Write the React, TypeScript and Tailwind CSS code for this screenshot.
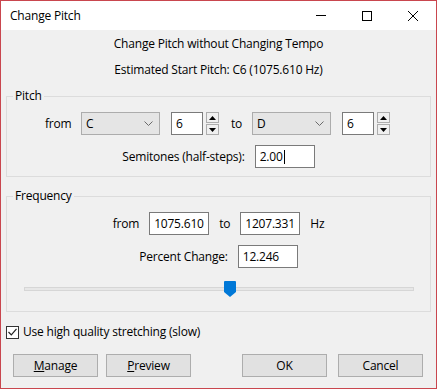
import React from 'react';

const font = { fontFamily: '"Segoe UI", "Open Sans", "Noto Sans", sans-serif' };

function Combo({ value }: { value: string }) {
  return (
    <div className="flex h-[23px] w-[79px] items-center justify-between border border-[#acacac] bg-[#e5e5e5] pl-[4px] pr-[5px]">
      <span>{value}</span>
      <svg width="9" height="5" viewBox="0 0 9 5" className="mr-[1px]">
        <path d="M0.5 0.5 L4.5 4.5 L8.5 0.5" fill="none" stroke="#6a6a6a" strokeWidth="1" />
      </svg>
    </div>
  );
}

function Field({ value, w = 'w-[60px]', caret = false }: { value: string; w?: string; caret?: boolean }) {
  return (
    <div className={`flex h-[23px] items-center border border-[#7a7a7a] bg-white pl-[4px] ${w}`}>
      <span>{value}</span>
      {caret && <span className="ml-[1px] h-[14px] w-[1px] bg-black" />}
    </div>
  );
}

function Spin() {
  return (
    <div className="flex flex-col gap-[1px]">
      <div className="flex h-[11px] w-[13px] items-center justify-center border border-[#adadad] bg-[#f0f0f0]">
        <svg width="7" height="4" viewBox="0 0 7 4"><path d="M0 4 L3.5 0 L7 4 Z" fill="#000" /></svg>
      </div>
      <div className="flex h-[11px] w-[13px] items-center justify-center border border-[#adadad] bg-[#f0f0f0]">
        <svg width="7" height="4" viewBox="0 0 7 4"><path d="M0 0 L3.5 4 L7 0 Z" fill="#000" /></svg>
      </div>
    </div>
  );
}

function Button({ children }: { children: React.ReactNode }) {
  return (
    <div className="flex h-[23px] w-[85px] items-center justify-center border border-[#adadad] bg-[#e1e1e1]">
      {children}
    </div>
  );
}

export default function App() {
  return (
    <div
      style={font}
      className="flex h-[389px] w-[437px] flex-col border border-[#c9464e] bg-[#f0f0f0] text-[12px] leading-[16px] tracking-[-0.2px] text-black"
    >
      {/* title bar */}
      <div className="flex h-[29px] items-center bg-white">
        <span className="ml-[9px] flex-1 text-[12px]">Change Pitch</span>
        <div className="flex h-full">
          <div className="flex w-[46px] items-center justify-center">
            <div className="h-[1px] w-[10px] bg-black" />
          </div>
          <div className="flex w-[46px] items-center justify-center">
            <div className="h-[10px] w-[10px] border border-black" />
          </div>
          <div className="flex w-[46px] items-center justify-center">
            <svg width="10" height="10" viewBox="0 0 10 10">
              <path d="M0 0 L10 10 M10 0 L0 10" stroke="#000" strokeWidth="1" />
            </svg>
          </div>
        </div>
      </div>

      <div className="mt-[6px] text-center">Change Pitch without Changing Tempo</div>
      <div className="mt-[10px] text-center">Estimated Start Pitch: C6 (1075.610 Hz)</div>

      {/* Pitch */}
      <fieldset className="mx-[5px] mt-[10px] border border-[#dcdcdc] pb-[8px]">
        <legend className="ml-[6px] px-[2px]">Pitch</legend>
        <div className="flex items-center pl-[38px] pt-[8px]">
          <span className="w-[36px]">from</span>
          <Combo value="C" />
          <div className="ml-[11px]">
            <Field value="6" w="w-[32px]" />
          </div>
          <div className="ml-[3px]">
            <Spin />
          </div>
          <span className="ml-[12px] w-[21px]">to</span>
          <Combo value="D" />
          <div className="ml-[11px]">
            <Field value="6" w="w-[32px]" />
          </div>
          <div className="ml-[3px]">
            <Spin />
          </div>
        </div>
        <div className="mt-[10px] flex items-center justify-center gap-[10px]">
          <span>Semitones (half-steps):</span>
          <Field value="2.00" caret />
        </div>
      </fieldset>

      {/* Frequency */}
      <fieldset className="mx-[5px] mt-[11px] border border-[#dcdcdc] pb-[14px]">
        <legend className="ml-[6px] px-[2px]">Frequency</legend>
        <div className="flex items-center justify-center gap-[10px] pt-[8px]">
          <span>from</span>
          <Field value="1075.610" />
          <span>to</span>
          <Field value="1207.331" />
          <span>Hz</span>
        </div>
        <div className="mt-[10px] flex items-center justify-center gap-[10px]">
          <span>Percent Change:</span>
          <Field value="12.246" />
        </div>
        <div className="relative ml-[17px] mt-[13px] flex h-[16px] w-[390px] items-center">
          <div className="h-[4px] w-full border border-[#d6d6d6] bg-[#e7e7e7]" />
          <svg className="absolute left-[200px] top-0" width="12" height="16" viewBox="0 0 12 16">
            <path d="M0 1 Q0 0 1 0 L11 0 Q12 0 12 1 L12 11 L6 16 L0 11 Z" fill="#0078d7" />
          </svg>
        </div>
      </fieldset>

      <div className="ml-[5px] mt-[12px] flex items-center gap-[4px]">
        <div className="flex h-[13px] w-[13px] items-center justify-center border border-[#333] bg-white">
          <svg width="9" height="8" viewBox="0 0 9 8">
            <path d="M0.5 4 L3.3 6.8 L8.5 0.8" fill="none" stroke="#222" strokeWidth="1.2" />
          </svg>
        </div>
        <span>Use high quality stretching (slow)</span>
      </div>

      <div className="ml-[12px] mt-[14px] flex items-center">
        <Button>
          <span><span className="underline">M</span>anage</span>
        </Button>
        <div className="ml-[8px]">
          <Button>
            <span><span className="underline">P</span>review</span>
          </Button>
        </div>
        <div className="ml-[51px]">
          <Button>OK</Button>
        </div>
        <div className="ml-[11px]">
          <Button>Cancel</Button>
        </div>
      </div>
    </div>
  );
}
